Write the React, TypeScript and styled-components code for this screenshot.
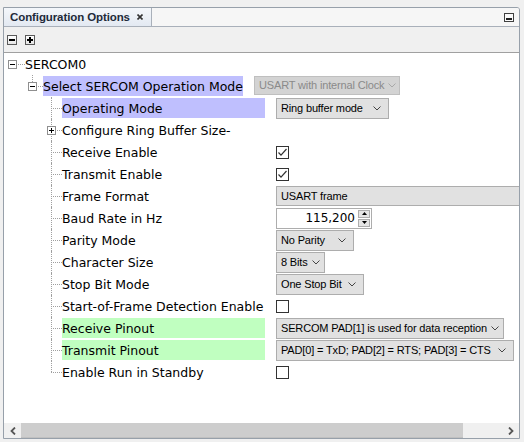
import React from 'react';
import styled, { createGlobalStyle } from 'styled-components';

const GlobalStyle = createGlobalStyle`
  html, body {
    margin: 0;
    padding: 0;
    background: #f0f0f0;
  }
  * {
    box-sizing: border-box;
  }
`;

const labelFont = `"DejaVu Sans", Verdana, sans-serif`;
const valueFont = `"Liberation Sans", Arial, sans-serif`;

const Page = styled.div`
  padding: 7px 0 0 3px;
  width: 524px;
  height: 442px;
`;

const Frame = styled.div`
  width: 517px;
  height: 432px;
  border: 1px solid #97a0aa;
  border-top-right-radius: 3px;
  display: flex;
  flex-direction: column;
  background: #f0f0f0;
  overflow: hidden;
`;

const TabBar = styled.div`
  height: 19px;
  display: flex;
  align-items: stretch;
  background: #f6f6f6;
  border-bottom: 1px solid #a9b0ba;
`;

const Tab = styled.div`
  width: 148px;
  display: flex;
  align-items: center;
  gap: 7px;
  padding-left: 6px;
  background: linear-gradient(#f4f7fb, #e3e9f2);
  border-right: 1px solid #a9b0ba;
  font: bold 11.5px ${valueFont};
  letter-spacing: -0.1px;
  color: #1e2a3a;
`;

const TabFill = styled.div`
  flex: 1;
  display: flex;
  align-items: center;
  justify-content: flex-end;
  padding-right: 5px;
`;

const Toolbar = styled.div`
  height: 26px;
  display: flex;
  align-items: center;
  gap: 8px;
  padding-left: 3px;
  border-bottom: 1px solid #a0a0a0;
`;

const ToolButton = styled.div`
  width: 10px;
  height: 10px;
  border: 1px solid #5a5a5a;
  background: linear-gradient(#ffffff, #e6e6e6);
  display: flex;
  align-items: center;
  justify-content: center;
`;

const Content = styled.div`
  flex: 1;
  background: #ffffff;
  overflow: hidden;
`;

const Row = styled.div<{ $split?: number }>`
  height: 22px;
  display: grid;
  grid-template-columns: ${(p) => p.$split ?? 272}px 1fr;
  align-items: center;
  white-space: nowrap;
`;

const TreeCell = styled.div`
  display: flex;
  align-items: stretch;
  height: 22px;
`;

const Indent = styled.div<{ $w: number }>`
  width: ${(p) => p.$w}px;
  flex: none;
`;

const Branch = styled.div<{ $w: number; $last?: boolean; $root?: boolean }>`
  position: relative;
  width: ${(p) => p.$w}px;
  flex: none;
  &::before {
    content: '';
    display: ${(p) => (p.$root ? 'none' : 'block')};
    position: absolute;
    left: 0;
    top: 0;
    height: ${(p) => (p.$last ? '11px' : '22px')};
    border-left: 1px dotted #a0a0a0;
  }
  &::after {
    content: '';
    position: absolute;
    left: 0;
    top: 11px;
    width: 100%;
    border-top: 1px dotted #a0a0a0;
  }
`;

const Expander = styled.div`
  position: absolute;
  z-index: 1;
  left: -4px;
  top: 7px;
  width: 9px;
  height: 9px;
  border: 1px solid #8f8f8f;
  background: #ffffff;
  display: flex;
  align-items: center;
  justify-content: center;
`;

const Label = styled.div<{ $tone?: 'blue' | 'green' }>`
  flex: 1;
  margin: 1px 11px 1px 0;
  padding-top: 1px;
  font: 12.5px/19px ${labelFont};
  color: #000;
  background: ${(p) =>
    p.$tone === 'blue' ? '#bfbffe' : p.$tone === 'green' ? '#c0ffc0' : 'transparent'};
`;

const ValueCell = styled.div`
  display: flex;
  align-items: center;
  height: 22px;
`;

const Combo = styled.div<{ $w: number; $disabled?: boolean }>`
  width: ${(p) => p.$w}px;
  height: ${(p) => (p.$disabled ? 19 : 21)}px;
  display: flex;
  align-items: center;
  justify-content: space-between;
  padding: 0 7px 0 4px;
  border: 1px solid ${(p) => (p.$disabled ? '#bfbfbf' : '#adadad')};
  background: ${(p) => (p.$disabled ? '#d3d3d3' : '#e1e1e1')};
  color: ${(p) => (p.$disabled ? '#8a8a8a' : '#000')};
  font: 11px ${valueFont};
  letter-spacing: -0.15px;
  margin-top: ${(p) => (p.$disabled ? -2 : 0)}px;
`;

const Field = styled.div`
  width: 260px;
  height: 20px;
  display: flex;
  align-items: center;
  padding-left: 4px;
  border: 1px solid #adadad;
  background: #e1e1e1;
  font: 11px ${valueFont};
  letter-spacing: -0.15px;
`;

const SpinBox = styled.div`
  width: 96px;
  height: 21px;
  display: flex;
  align-items: stretch;
  border: 1px solid #adadad;
  background: #fff;
`;

const SpinText = styled.div`
  flex: 1;
  text-align: right;
  padding-right: 3px;
  font: 12px/19px ${labelFont};
`;

const SpinButtons = styled.div`
  width: 13px;
  display: flex;
  flex-direction: column;
  padding: 1px 1px 1px 0;
  gap: 1px;
`;

const SpinButton = styled.div`
  flex: 1;
  border: 1px solid #adadad;
  background: #e5e5e5;
  display: flex;
  align-items: center;
  justify-content: center;
`;

const Check = styled.div`
  width: 13px;
  height: 13px;
  border: 1px solid #333;
  background: #fff;
  display: flex;
  align-items: center;
  justify-content: center;
`;

const HScroll = styled.div`
  height: 15px;
  display: flex;
  align-items: stretch;
  background: #f0f0f0;
`;

const ScrollArrow = styled.div`
  width: 17px;
  display: flex;
  align-items: center;
  justify-content: center;
`;

const ScrollTrack = styled.div`
  flex: 1;
  display: flex;
  align-items: stretch;
`;

const Thumb = styled.div`
  width: 442px;
  background: #cdcdcd;
  border-bottom: 1px solid #c0c0c0;
`;

const Chevron = ({ color = '#444' }: { color?: string }) => (
  <svg width="8" height="5" viewBox="0 0 8 5" style={{ flex: 'none', marginLeft: 4 }}>
    <polyline points="0.5,0.5 4,4 7.5,0.5" fill="none" stroke={color} strokeWidth="1" />
  </svg>
);

const Minus = () => (
  <svg width="5" height="5" viewBox="0 0 5 5">
    <rect x="0" y="2" width="5" height="1" fill="#000" />
  </svg>
);

const Plus = () => (
  <svg width="5" height="5" viewBox="0 0 5 5">
    <rect x="0" y="2" width="5" height="1" fill="#000" />
    <rect x="2" y="0" width="1" height="5" fill="#000" />
  </svg>
);

const CheckMark = () => (
  <svg width="11" height="11" viewBox="0 0 11 11">
    <polyline points="1.5,5.5 4,8.2 9.5,2" fill="none" stroke="#333" strokeWidth="1.2" />
  </svg>
);

type Level2 = {
  label: string;
  tone?: 'blue' | 'green';
  value: React.ReactNode;
  expandable?: boolean;
};

const items: Level2[] = [
  {
    label: 'Operating Mode',
    tone: 'blue',
    value: (
      <Combo $w={113}>
        Ring buffer mode <Chevron />
      </Combo>
    ),
  },
  { label: 'Configure Ring Buffer Size-', value: null, expandable: true },
  {
    label: 'Receive Enable',
    value: (
      <Check>
        <CheckMark />
      </Check>
    ),
  },
  {
    label: 'Transmit Enable',
    value: (
      <Check>
        <CheckMark />
      </Check>
    ),
  },
  { label: 'Frame Format', value: <Field>USART frame</Field> },
  {
    label: 'Baud Rate in Hz',
    value: (
      <SpinBox>
        <SpinText>115,200</SpinText>
        <SpinButtons>
          <SpinButton>
            <svg width="5" height="3" viewBox="0 0 5 3">
              <polygon points="0,3 2.5,0 5,3" fill="#000" />
            </svg>
          </SpinButton>
          <SpinButton>
            <svg width="5" height="3" viewBox="0 0 5 3">
              <polygon points="0,0 2.5,3 5,0" fill="#000" />
            </svg>
          </SpinButton>
        </SpinButtons>
      </SpinBox>
    ),
  },
  {
    label: 'Parity Mode',
    value: (
      <Combo $w={78}>
        No Parity <Chevron />
      </Combo>
    ),
  },
  {
    label: 'Character Size',
    value: (
      <Combo $w={49}>
        8 Bits <Chevron />
      </Combo>
    ),
  },
  {
    label: 'Stop Bit Mode',
    value: (
      <Combo $w={88}>
        One Stop Bit <Chevron />
      </Combo>
    ),
  },
  { label: 'Start-of-Frame Detection Enable', value: <Check /> },
  {
    label: 'Receive Pinout',
    tone: 'green',
    value: (
      <Combo $w={228}>
        SERCOM PAD[1] is used for data reception <Chevron />
      </Combo>
    ),
  },
  {
    label: 'Transmit Pinout',
    tone: 'green',
    value: (
      <Combo $w={238}>
        PAD[0] = TxD; PAD[2] = RTS; PAD[3] = CTS <Chevron />
      </Combo>
    ),
  },
  { label: 'Enable Run in Standby', value: <Check /> },
];

const App: React.FC = () => (
  <Page>
    <GlobalStyle />
    <Frame>
      <TabBar>
        <Tab>
          Configuration Options
          <svg width="6" height="6" viewBox="0 0 6 6">
            <path d="M0.5 0.5 L5.5 5.5 M5.5 0.5 L0.5 5.5" stroke="#333" strokeWidth="1.6" />
          </svg>
        </Tab>
        <TabFill>
          <svg width="10" height="9" viewBox="0 0 10 9">
            <rect x="0.5" y="0.5" width="9" height="8" fill="#fafafa" stroke="#404040" />
            <rect x="2" y="5" width="6" height="2" fill="#202020" />
          </svg>
        </TabFill>
      </TabBar>
      <Toolbar>
        <ToolButton>
          <svg width="6" height="6" viewBox="0 0 6 6">
            <rect x="0" y="2" width="6" height="2" fill="#000" />
          </svg>
        </ToolButton>
        <ToolButton>
          <svg width="6" height="6" viewBox="0 0 6 6">
            <rect x="0" y="2" width="6" height="2" fill="#000" />
            <rect x="2" y="0" width="2" height="6" fill="#000" />
          </svg>
        </ToolButton>
      </Toolbar>
      <Content>
        <Row>
          <TreeCell>
            <Indent $w={8} />
            <Branch $w={13} $root>
              <Expander>
                <Minus />
              </Expander>
            </Branch>
            <Label>SERCOM0</Label>
          </TreeCell>
          <ValueCell />
        </Row>
        <Row $split={250}>
          <TreeCell>
            <Indent $w={28} />
            <Branch $w={11} $last>
              <Expander>
                <Minus />
              </Expander>
            </Branch>
            <Label $tone="blue">Select SERCOM Operation Mode</Label>
          </TreeCell>
          <ValueCell>
            <Combo $w={146} $disabled>
              USART with internal Clock <Chevron color="#a8a8a8" />
            </Combo>
          </ValueCell>
        </Row>
        {items.map((it, i) => (
          <Row key={it.label}>
            <TreeCell>
              <Indent $w={47} />
              <Branch $w={11} $last={i === items.length - 1}>
                {it.expandable && (
                  <Expander>
                    <Plus />
                  </Expander>
                )}
              </Branch>
              <Label $tone={it.tone}>{it.label}</Label>
            </TreeCell>
            <ValueCell>{it.value}</ValueCell>
          </Row>
        ))}
      </Content>
      <HScroll>
        <ScrollArrow>
          <svg width="6" height="8" viewBox="0 0 6 8">
            <polyline points="5,0.5 1.5,4 5,7.5" fill="none" stroke="#555" strokeWidth="1.8" />
          </svg>
        </ScrollArrow>
        <ScrollTrack>
          <Thumb />
        </ScrollTrack>
        <ScrollArrow>
          <svg width="6" height="8" viewBox="0 0 6 8">
            <polyline points="1,0.5 4.5,4 1,7.5" fill="none" stroke="#555" strokeWidth="1.8" />
          </svg>
        </ScrollArrow>
      </HScroll>
    </Frame>
  </Page>
);

export default App;
